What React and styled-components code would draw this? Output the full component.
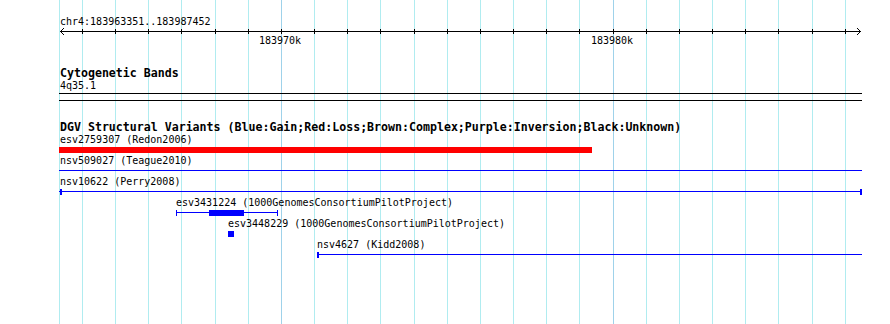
import React from "react";
import styled, { createGlobalStyle } from "styled-components";

const GlobalStyle = createGlobalStyle`
  html, body {
    margin: 0;
    padding: 0;
    background: #fff;
  }
`;

// view: chr4:183963351..183987452 drawn between x=59 and x=861
const VIEW_LEFT = 59;
const VIEW_RIGHT = 861;
const FIRST_KB_X = 82.4;
const PX_PER_KB = 33.165;

const gridXs = [VIEW_LEFT].concat(
  Array.from({ length: 24 }, (_, k) => Math.floor(FIRST_KB_X + k * PX_PER_KB))
);
const majorTicks = [
  { k: 6, label: "183970k" },
  { k: 16, label: "183980k" },
];
const isMajor = x => majorTicks.some(t => gridXs[t.k + 1] === x);

const variants = [
  { name: "esv2759307", study: "Redon2006", labelX: 60, glyph: "box", x1: 59, x2: 591, color: "#ff0000" },
  { name: "nsv509027", study: "Teague2010", labelX: 60, glyph: "line", x1: 59, x2: 861 },
  { name: "nsv10622", study: "Perry2008", labelX: 60, glyph: "line", x1: 59, x2: 861, caps: [60, 860] },
  { name: "esv3431224", study: "1000GenomesConsortiumPilotProject", labelX: 176, glyph: "line", x1: 176, x2: 277, ticks: [176, 277], thick: [209, 243] },
  { name: "esv3448229", study: "1000GenomesConsortiumPilotProject", labelX: 228, glyph: "box", x1: 228, x2: 233 },
  { name: "nsv4627", study: "Kidd2008", labelX: 317, glyph: "line", x1: 317, x2: 861, caps: [317] },
];

const Canvas = styled.div`
  position: relative;
  width: 890px;
  height: 324px;
  overflow: hidden;
  background: #fff;
  color: #000;
  font-family: "DejaVu Sans Mono", "Liberation Mono", monospace;
`;

const Grid = styled.div`
  position: absolute;
  inset: 0;
  pointer-events: none;
`;

const GridLine = styled.div`
  position: absolute;
  top: 0;
  bottom: 0;
  width: 1px;
  background: ${p => (p.$major ? "#9fd2ea" : "#b0ecf0")};
`;

const Tracks = styled.div`
  position: relative;
  display: flex;
  flex-direction: column;
`;

const Track = styled.section`
  display: flex;
  flex-direction: column;
  margin-top: ${p => p.$gap}px;
`;

const SmallText = styled.div`
  font-size: 10px;
  line-height: 13px;
  padding-bottom: 1px;
  white-space: pre;
`;

const RulerTitle = styled(SmallText)`
  line-height: 12px;
  padding: 0 0 0 60px;
`;

const AxisSvg = styled.svg`
  display: block;
  width: 890px;
  height: 8px;
`;

const TickLabels = styled.div`
  position: relative;
  height: 11px;
  font-size: 10px;
  line-height: 9px;
`;

const TickLabel = styled.span`
  position: absolute;
  top: 0;
  white-space: pre;
`;

const TrackTitle = styled.h3`
  margin: 0;
  padding: 0 0 0 60px;
  font-size: 11.6px;
  line-height: 11px;
  height: 11px;
  font-weight: 700;
  white-space: pre;
`;

const BandLabel = styled(SmallText)`
  padding-left: 60px;
`;

const Ideogram = styled.div`
  margin-left: ${VIEW_LEFT}px;
  width: ${VIEW_RIGHT - VIEW_LEFT + 1}px;
  height: 6px;
  border-top: 1px solid #000;
  border-bottom: 1px solid #000;
`;

const VariantRow = styled.div`
  display: flex;
  flex-direction: column;
`;

const Lane = styled.div`
  position: relative;
  height: 7px;
`;

const Stroke = styled.div`
  position: absolute;
  top: 2px;
  height: 1px;
  background: #0000ff;
`;

const Block = styled.div`
  position: absolute;
  top: 0;
  height: 6px;
  background: ${p => p.$color || "#0000ff"};
`;

const Cap = styled(Block)`
  width: ${p => p.$w}px;
`;

function Axis() {
  return (
    <AxisSvg viewBox="0 0 890 8">
      <line x1="60" y1="3.5" x2="861" y2="3.5" stroke="#000" strokeWidth="1" />
      <polyline points="64,0 60.5,3.5 64,7" fill="none" stroke="#000" strokeWidth="1" />
      <polyline points="857,0 860.5,3.5 857,7" fill="none" stroke="#000" strokeWidth="1" />
      {gridXs.slice(1).map(x => (
        <line key={x} x1={x + 0.5} y1="1" x2={x + 0.5} y2="6" stroke="#000" strokeWidth="1" />
      ))}
    </AxisSvg>
  );
}

function Variant({ v }) {
  return (
    <VariantRow>
      <SmallText style={{ paddingLeft: v.labelX }}>
        {v.name} ({v.study})
      </SmallText>
      <Lane>
        {v.glyph === "box" && (
          <Block $color={v.color} style={{ left: v.x1, width: v.x2 - v.x1 + 1 }} />
        )}
        {v.glyph === "line" && (
          <Stroke style={{ left: v.x1, width: v.x2 - v.x1 + 1 }} />
        )}
        {v.thick && <Block style={{ left: v.thick[0], width: v.thick[1] - v.thick[0] + 1 }} />}
        {(v.caps || []).map(x => <Cap key={"c" + x} $w={2} style={{ left: x }} />)}
        {(v.ticks || []).map(x => <Cap key={"t" + x} $w={1} style={{ left: x }} />)}
      </Lane>
    </VariantRow>
  );
}

export default function App() {
  return (
    <>
      <GlobalStyle />
      <Canvas>
        <Grid>
          {gridXs.map(x => (
            <GridLine key={x} $major={isMajor(x)} style={{ left: x }} />
          ))}
        </Grid>
        <Tracks>
          <Track $gap={16}>
            <RulerTitle>chr4:183963351..183987452</RulerTitle>
            <Axis />
            <TickLabels>
              {majorTicks.map(t => (
                <TickLabel key={t.label} style={{ left: gridXs[t.k + 1] - 22 }}>
                  {t.label}
                </TickLabel>
              ))}
            </TickLabels>
          </Track>

          <Track $gap={21}>
            <TrackTitle>Cytogenetic Bands</TrackTitle>
            <BandLabel>4q35.1</BandLabel>
            <Ideogram />
          </Track>

          <Track $gap={21}>
            <TrackTitle>
              DGV Structural Variants (Blue:Gain;Red:Loss;Brown:Complex;Purple:Inversion;Black:Unknown)
            </TrackTitle>
            {variants.map(v => (
              <Variant key={v.name} v={v} />
            ))}
          </Track>
        </Tracks>
      </Canvas>
    </>
  );
}
